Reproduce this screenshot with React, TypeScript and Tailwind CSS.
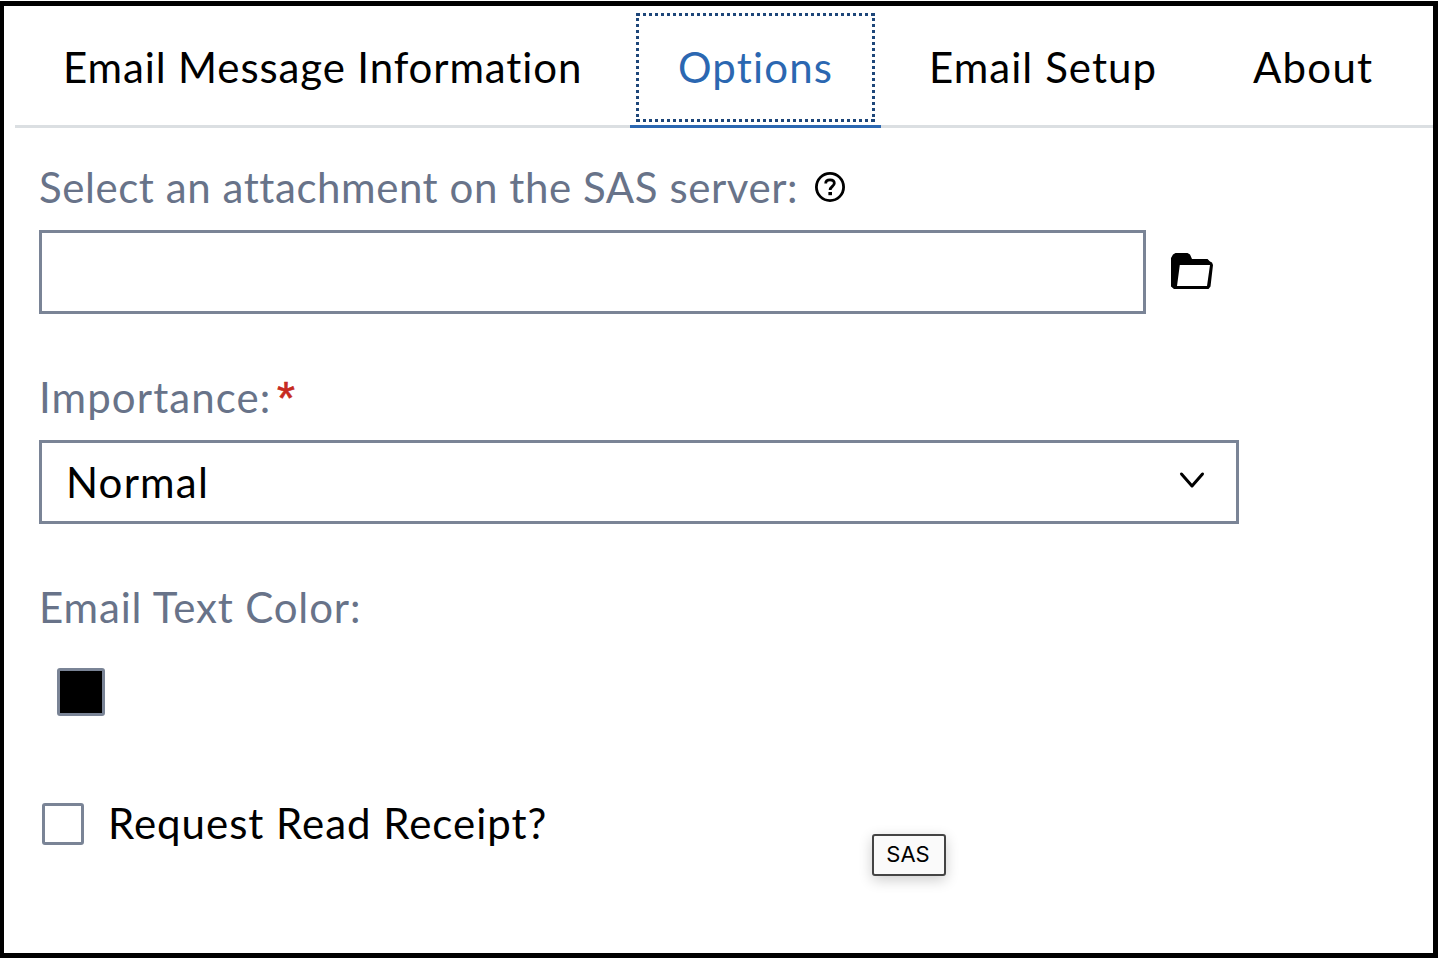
import React from "react";

const label = "font-['Lato'] text-[42px] leading-[50px] whitespace-nowrap";
const muted = "text-[#687389]";

function HelpIcon() {
  return (
    <svg width="32" height="32" viewBox="0 0 32 32" fill="none" stroke="#000">
      <circle cx="16" cy="16" r="13.6" strokeWidth="2.8" />
      <path d="M11.700 12.400c0-2.200 1.700-3.500 4.300-3.500 2.500 0 4.300 1.300 4.300 3.300 0 3.100-4.200 3.200-4.200 6.900" strokeWidth="2.800" />
      <rect x="14.400" y="21" width="3.600" height="3.200" fill="#000" stroke="none" />
    </svg>
  );
}

function FolderIcon() {
  return (
    <svg width="42" height="36" viewBox="0 0 42 36">
      <path
        fillRule="evenodd"
        d="M0 5 2 1.500 4.500 0H16.500L19 1.500 21 6H36.500L39 8.500 41 9.500 42 12 39.500 33.500 37.500 36H3L0 33.500ZM8.800 12 6 33H36L39 12Z"
      />
    </svg>
  );
}

export default function App() {
  return (
    <div className="h-[958px] w-[1438px] overflow-hidden bg-white pt-px font-['Lato',sans-serif] text-black">
      <div className="relative h-[957px] border-[5px] border-l-4 border-black bg-white">
        <nav className="ml-[11px] flex h-[122px] border-b-[3px] border-[#dbdfe2]">
          <div className="flex w-[615px] pt-[36px] pl-[48px]">
            <span className={label + " h-[50px] tracking-[0.88px]"}>Email Message Information</span>
          </div>
          <div className="relative flex h-[122px] w-[251px] border-b-[3px] border-[#2b67b1] pt-[36px] pl-[48px]">
            <span className={label + " h-[50px] tracking-[1.15px] text-[#2b67b1]"}>Options</span>
            <svg className="absolute top-[7px] left-[6px]" width="239" height="109" fill="none" stroke="#1d4679" strokeWidth="3">
              <path d="M1 1.500H239M1 107.500H239" strokeDasharray="3 3" />
              <path d="M1.500 5V106M237.500 5V106" strokeDasharray="3 3" />
              <path d="M0 1.500H1M0 107.500H1M238 1.500H239M238 107.500H239" />
            </svg>
          </div>
          <div className="flex w-[324px] pt-[36px] pl-[48px]">
            <span className={label + " h-[50px] tracking-[1.05px]"}>Email Setup</span>
          </div>
          <div className="flex pt-[36px] pl-[48px]">
            <span className={label + " h-[50px] tracking-[1.25px]"}>About</span>
          </div>
        </nav>
        <main className="flex flex-col pl-[35px]">
          <div className="mt-[34px] flex h-[50px] items-center">
            <span className={label + " w-[775px] tracking-[0.57px] " + muted}>Select an attachment on the SAS server:</span>
            <HelpIcon />
          </div>
          <div className="mt-[18px] flex items-center">
            <div className="h-[84px] w-[1107px] border-[3px] border-[#7a8496]" />
            <div className="mb-[2px] ml-[25px]"><FolderIcon /></div>
          </div>
          <div className="mt-[58px] flex h-[50px]">
            <span className={label + " w-[238px] tracking-[1.1px] " + muted}>Importance:</span>
            <span className="pt-px font-['Liberation_Sans'] text-[46px] leading-[50px] text-[#c62a20] [-webkit-text-stroke:0.6px_#c62a20]">*</span>
          </div>
          <div className="mt-[18px] flex h-[84px] w-[1200px] items-center justify-between border-[3px] border-[#7a8496] pr-[31px] pl-[24px]">
            <span className={label + " tracking-[1.2px]"}>Normal</span>
            <svg className="mb-[5px]" width="26" height="18" viewBox="0 0 26 18" fill="none" stroke="#000" strokeWidth="3" strokeLinecap="round" strokeLinejoin="round">
              <path d="M2.500 3 13 15 23.500 3" />
            </svg>
          </div>
          <div className="mt-[58px] flex h-[50px]">
            <span className={label + " tracking-[0.85px] " + muted}>Email Text Color:</span>
          </div>
          <div className="mt-[36px] ml-[18px] size-[48px] rounded-[3px] border-[3px] border-[#7a8496] bg-black" />
          <div className="mt-[83px] ml-[3px] flex h-[50px] items-center">
            <div className="size-[42px] rounded-[3px] border-[3px] border-[#7a8496]" />
            <span className={label + " mb-[2px] ml-[24px] tracking-[0.98px]"}>Request Read Receipt?</span>
          </div>
        </main>
        <div className="absolute top-[828px] left-[868px] flex h-[42px] w-[74px] items-center justify-center rounded-[3px] border-2 border-[#444] bg-[#fafafa] pr-[2px] pb-[2px] font-['Inter'] text-[22px] shadow-[0_4px_14px_rgba(0,0,0,0.2)]">SAS</div>
      </div>
    </div>
  );
}
